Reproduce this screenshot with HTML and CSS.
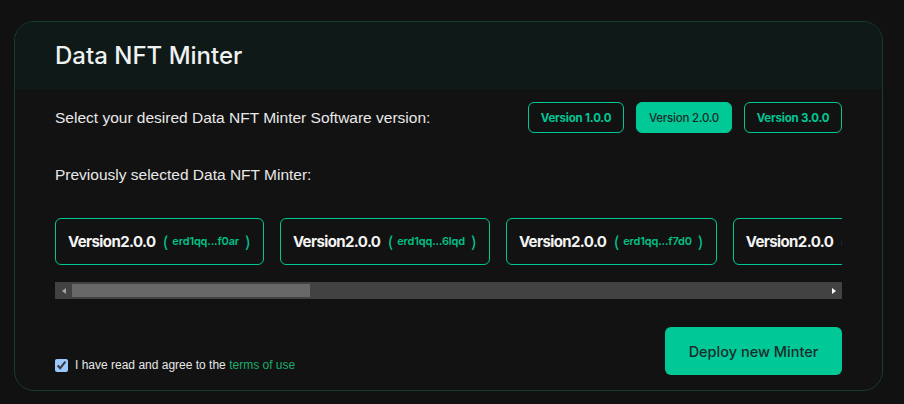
FILE: index.html
```html
<!DOCTYPE html>
<html lang="en">
<head>
<meta charset="utf-8">
<title>Data NFT Minter</title>
<link rel="stylesheet" href="styles.css">
</head>
<body>
<div class="panel">
  <div class="panel-header">
    <h1 class="title">Data NFT Minter</h1>
  </div>
  <div class="panel-body">
    <div class="version-row">
      <p class="label">Select your desired Data NFT Minter Software version:</p>
      <div class="versions">
        <button class="ver">Version 1.0.0</button>
        <button class="ver ver-active">Version 2.0.0</button>
        <button class="ver">Version 3.0.0</button>
      </div>
    </div>
    <p class="label prev-label">Previously selected Data NFT Minter:</p>
    <div class="minters">
      <div class="minter"><span class="mv">Version2.0.0</span><span class="par">(</span><span class="addr">erd1qq...f0ar</span><span class="par par-close">)</span></div>
      <div class="minter"><span class="mv">Version2.0.0</span><span class="par">(</span><span class="addr">erd1qq...6lqd</span><span class="par par-close">)</span></div>
      <div class="minter"><span class="mv">Version2.0.0</span><span class="par">(</span><span class="addr">erd1qq...f7d0</span><span class="par par-close">)</span></div>
      <div class="minter"><span class="mv">Version2.0.0</span><span class="par">(</span><span class="addr">erd1qq...a9k2</span><span class="par par-close">)</span></div>
    </div>
    <div class="scrollbar">
      <span class="sb-btn"><span class="arrow-left"></span></span>
      <span class="sb-track"><span class="sb-thumb"></span></span>
      <span class="sb-btn"><span class="arrow-right"></span></span>
    </div>
    <div class="bottom-row">
      <label class="agree"><input type="checkbox" class="check" checked> <span>I have read and agree to the <a class="terms" href="#">terms of use</a></span></label>
      <button class="deploy">Deploy new Minter</button>
    </div>
  </div>
</div>
</body>
</html>
```
FILE: styles.css
```css
* { box-sizing: border-box; }
html, body { margin: 0; padding: 0; }
body {
  background: #111111;
  width: 904px;
  height: 404px;
  overflow: hidden;
  font-family: "Liberation Sans", Arial, sans-serif;
  color: #e6e6e6;
}
.panel {
  margin: 21px 0 0 14px;
  width: 869px;
  height: 370px;
  border: 1px solid #173d30;
  border-radius: 20px;
  background: #121212;
  overflow: hidden;
}
.panel-header {
  height: 67px;
  background: #0f1918;
  display: flex;
  align-items: center;
  padding-left: 40px;
}
.title {
  margin: 0;
  font-family: "Inter", sans-serif;
  font-weight: 500;
  font-size: 24px;
  letter-spacing: 0;
  color: #eef2f1;
}
.panel-body {
  padding: 13px 40px 16px 40px;
}
.version-row {
  display: flex;
  justify-content: space-between;
  align-items: center;
  height: 31px;
}
.label {
  margin: 0;
  font-size: 15.5px;
  line-height: 22px;
  color: #e8e8e8;
}
.versions {
  display: flex;
  gap: 12px;
}
.ver {
  height: 31px;
  padding: 0;
  width: 96px;
  border: 1px solid #00c795;
  border-radius: 6px;
  background: transparent;
  color: #00c795;
  font-family: "Inter", sans-serif;
  font-weight: 700;
  font-size: 11.5px;
  letter-spacing: -0.2px;
}
.ver:last-child { width: 98px; }
.ver-active {
  background: #00c896;
  color: #1b2a2a;
  font-weight: 500;
}
.prev-label {
  margin-top: 31px;
}
.minters {
  margin-top: 32px;
  display: flex;
  gap: 16px;
  overflow: hidden;
}
.minter {
  flex: none;
  height: 47px;
  display: flex;
  align-items: center;
  padding: 0 12px 0 12px;
  border: 1px solid #00c795;
  border-radius: 6px;
  white-space: nowrap;
}
.mv {
  font-family: "Inter", sans-serif;
  font-weight: 700;
  font-size: 15px;
  letter-spacing: -0.6px;
  color: #f4f4f4;
}
.par {
  font-family: "Inter", sans-serif;
  font-size: 16px;
  color: #00c795;
  margin-left: 7px;
}
.par-close {
  margin-left: 6px;
}
.addr {
  font-family: "Inter", sans-serif;
  font-weight: 600;
  font-size: 11px;
  letter-spacing: -0.15px;
  color: #00c188;
  margin-left: 4px;
  position: relative;
  top: -1px;
}
.scrollbar {
  margin-top: 17px;
  height: 17px;
  display: flex;
  background: #424242;
}
.sb-btn {
  width: 17px;
  flex: none;
  display: flex;
  align-items: center;
  justify-content: center;
}
.sb-track {
  flex: 1;
  padding: 2px 0;
}
.sb-thumb {
  display: block;
  width: 238px;
  height: 13px;
  background: #686868;
}
.arrow-left {
  width: 0; height: 0;
  border-top: 3.5px solid transparent;
  border-bottom: 3.5px solid transparent;
  border-right: 4px solid #a3a3a3;
}
.arrow-right {
  width: 0; height: 0;
  border-top: 3.5px solid transparent;
  border-bottom: 3.5px solid transparent;
  border-left: 4px solid #ffffff;
}
.bottom-row {
  margin-top: 28px;
  display: flex;
  justify-content: space-between;
  align-items: flex-end;
}
.agree {
  display: flex;
  align-items: center;
  gap: 7px;
  font-size: 12px;
  color: #e6e6e6;
  margin-bottom: 3px;
}
.check {
  margin: 0;
  width: 13px;
  height: 13px;
  color-scheme: dark;
}
.terms {
  color: #19ad6d;
  text-decoration: none;
}
.deploy {
  width: 177px;
  height: 48px;
  border: none;
  border-radius: 6px;
  background: #00c896;
  color: #1c2b2b;
  font-family: "Inter", sans-serif;
  font-weight: 500;
  font-size: 14.5px;
  padding: 0;
}
```
